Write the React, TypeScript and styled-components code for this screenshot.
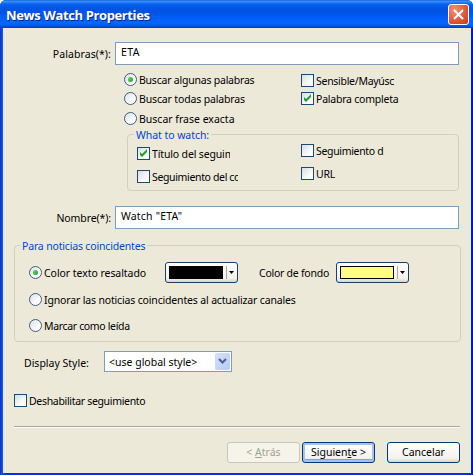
import React from "react";
import styled, { createGlobalStyle, css } from "styled-components";

const GlobalStyle = createGlobalStyle`
  * { box-sizing: border-box; }
  body { margin: 0; }
`;

const Window = styled.main`
  display: flex;
  flex-direction: column;
  width: 473px;
  height: 475px;
  overflow: hidden;
  border-radius: 6px 6px 0 0;
  background: linear-gradient(90deg, #0831d9 0, #0a4be6 2px, #1660ee 3px, #0831d9 4px, #0831d9 469px, #0019b0 473px);
  font: 10.5px/14px "Noto Sans", sans-serif;
  color: #000;
`;

const TitleBar = styled.header`
  display: flex;
  align-items: center;
  justify-content: space-between;
  flex: none;
  height: 28px;
  padding: 1px 4px 0 6px;
  background: linear-gradient(#0a50d0 0, #3a94ff 1px, #2a86fb 2px, #0a62ee 4px, #0055e5 8px, #0054e3 12px, #025cf5 17px, #0466ff 23px, #0360f6 25px, #0148cf 27px, #003dbc 28px);
`;

const Title = styled.h1`
  margin: 0;
  color: #fff;
  font: 700 13px/18px "Open Sans", sans-serif;
  letter-spacing: -0.38px;
  text-shadow: 1px 1px 0 #0a2a8c;
`;

const CloseButton = styled.button`
  display: flex;
  align-items: center;
  justify-content: center;
  width: 21px;
  height: 21px;
  padding: 0;
  border: 1px solid #fff;
  border-radius: 3px;
  background: radial-gradient(circle at 30% 25%, #f0927a 0, #e25d3c 50%, #c43b14 100%);
`;

const Body = styled.div`
  display: flex;
  flex-direction: column;
  flex: 1;
  margin: 0 2px 2px 3px;
  padding: 14px 10px 0 11px;
  background: #ece9d8;
`;

const Text = styled.span<{ $track?: number; $clip?: number }>`
  flex: none;
  white-space: pre;
  letter-spacing: ${(p) => p.$track ?? 0}px;
  ${(p) => p.$clip && css`
    width: ${p.$clip}px;
    overflow: hidden;
  `}
`;

const Field = styled.div<{ $gap?: number }>`
  display: grid;
  grid-template-columns: 97px 344px;
  column-gap: 4px;
  align-items: center;
  height: 23px;
  margin-top: ${(p) => p.$gap ?? 0}px;
  & > span { justify-self: end; }
`;

const Input = styled.div`
  height: 23px;
  padding: 2px 5px;
  border: 1px solid #7f9db9;
  background: #fff;
`;

const Options = styled.div`
  display: grid;
  grid-template-columns: 177px 1fr;
  height: 69px;
  padding: 8px 0 0 110px;
`;

const Column = styled.div<{ $gap: number; $top?: number }>`
  display: flex;
  flex-direction: column;
  gap: ${(p) => p.$gap}px;
  padding-top: ${(p) => p.$top ?? 0}px;
`;

const Choice = styled.label<{ $top?: number }>`
  display: flex;
  align-items: center;
  gap: 2px;
  height: 13px;
  margin-top: ${(p) => p.$top ?? 0}px;
`;

const RadioRing = styled.span`
  display: flex;
  flex: none;
  align-items: center;
  justify-content: center;
  width: 13px;
  height: 13px;
  border: 1px solid #3b5f84;
  border-radius: 50%;
  background: linear-gradient(135deg, #dcdfe0, #fff 70%);
`;

const RadioDot = styled.span`
  width: 5px;
  height: 5px;
  border-radius: 50%;
  background: radial-gradient(circle at 35% 35%, #55d551, #1b9a18);
`;

const CheckSquare = styled.span`
  display: flex;
  flex: none;
  align-items: center;
  justify-content: center;
  width: 13px;
  height: 13px;
  border: 1px solid #1c4a78;
  background: linear-gradient(135deg, #d8dde2, #fff 75%);
`;

const Group = styled.section<{ $left: number; $width: number; $height: number; $top?: number }>`
  display: flex;
  flex-direction: column;
  flex: none;
  width: ${(p) => p.$width}px;
  height: ${(p) => p.$height}px;
  margin: ${(p) => p.$top ?? 0}px 0 0 ${(p) => p.$left}px;
  border: 1px solid #d0d0bf;
  border-radius: 4px;
`;

const Legend = styled.div<{ $left: number }>`
  align-self: flex-start;
  height: 14px;
  margin: -7px 0 0 ${(p) => p.$left}px;
  padding: 0 2px;
  background: #ece9d8;
  color: #0046d5;
`;

const WatchGrid = styled.div`
  display: grid;
  grid-template-columns: 164px 1fr;
  padding: 2px 0 0 9px;
`;

const MatchList = styled.div`
  display: flex;
  flex-direction: column;
  padding: 9px 0 0 14px;
`;

const ColorRow = styled.div`
  display: grid;
  grid-template-columns: 136px 94px 77px 73px;
  align-items: center;
  height: 21px;
`;

const ColorButton = styled.div`
  display: flex;
  align-items: center;
  width: 73px;
  height: 21px;
  padding-left: 3px;
  border: 1px solid #1d3f66;
  border-radius: 3px;
  background: linear-gradient(#fff, #f3f2ec 80%, #d9d5c8);
`;

const Swatch = styled.span<{ $color: string }>`
  width: 54px;
  height: 13px;
  border: 1px solid #000;
  background: ${(p) => p.$color};
`;

const Divider = styled.span`
  width: 1px;
  height: 13px;
  margin: 0 2px 0 3px;
  background: #aaa89c;
`;

const StyleRow = styled.div`
  display: flex;
  align-items: center;
  height: 21px;
  margin: 9px 0 22px 10px;
`;

const StyleLabel = styled.div`
  width: 80px;
  padding-top: 2px;
`;

const Select = styled.div`
  display: flex;
  align-items: center;
  justify-content: space-between;
  width: 128px;
  height: 21px;
  padding: 1px 1px 1px 4px;
  border: 1px solid #7f9db9;
  background: #fff;
`;

const SelectArrow = styled.span`
  display: flex;
  align-items: center;
  justify-content: center;
  width: 15px;
  height: 17px;
  border-radius: 2px;
  background: linear-gradient(135deg, #d3dffd, #b7cbf8);
`;

const Rule = styled.hr`
  width: 446px;
  height: 2px;
  margin: 19px 0 14px;
  border: 0;
  border-top: 1px solid #aca899;
  background: #fff;
`;

const Footer = styled.footer`
  display: flex;
  justify-content: flex-end;
  width: 446px;
`;

const PushButton = styled.button<{ $kind?: "disabled" | "primary"; $left?: number }>`
  width: 73px;
  height: 21px;
  margin: 0 0 0 ${(p) => p.$left ?? 0}px;
  padding: 0 0 1px;
  border: 1px solid #003c74;
  border-radius: 3px;
  background: linear-gradient(#fff, #f3f2ec 80%, #d9d5c8);
  color: #000;
  font: inherit;
  ${(p) => p.$kind === "primary" && css`
    box-shadow: inset 0 0 0 2px #a5c2f2, inset 0 -3px 0 #7f9fe6;
  `}
  ${(p) => p.$kind === "disabled" && css`
    border-color: #c9c7ba;
    background: #f5f4ea;
    color: #a1a192;
  `}
`;

function Radio({ label, on, track, top }: { label: string; on?: boolean; track?: number; top?: number }) {
  return (
    <Choice $top={top}>
      <RadioRing>{on && <RadioDot />}</RadioRing>
      <Text $track={track}>{label}</Text>
    </Choice>
  );
}

function Check({ label, on, track, clip }: { label: string; on?: boolean; track?: number; clip?: number }) {
  return (
    <Choice>
      <CheckSquare>
        {on && (
          <svg width="9" height="9" viewBox="0 0 9 9">
            <path d="M1 3v3l2 2 5-5V0L3 5z" fill="#21a121" />
          </svg>
        )}
      </CheckSquare>
      <Text $track={track} $clip={clip}>{label}</Text>
    </Choice>
  );
}

function ColorPicker({ color }: { color: string }) {
  return (
    <ColorButton>
      <Swatch $color={color} />
      <Divider />
      <svg width="5" height="3" viewBox="0 0 5 3"><path d="M0 0h5L2.5 3z" fill="#000" /></svg>
    </ColorButton>
  );
}

export default function App() {
  return (
    <>
      <GlobalStyle />
      <Window>
        <TitleBar>
          <Title>News Watch Properties</Title>
          <CloseButton aria-label="Close">
            <svg width="11" height="11" viewBox="0 0 11 11">
              <path d="M1 1l9 9M10 1l-9 9" stroke="#fff" strokeWidth="2" />
            </svg>
          </CloseButton>
        </TitleBar>
        <Body>
          <Field>
            <Text $track={0.08}>Palabras(*):</Text>
            <Input><Text $track={0.4}>ETA</Text></Input>
          </Field>
          <Options>
            <Column $gap={6}>
              <Radio on label="Buscar algunas palabras" track={-0.22} />
              <Radio label="Buscar todas palabras" track={-0.15} />
              <Radio top={1} label="Buscar frase exacta" />
            </Column>
            <Column $gap={5} $top={1}>
              <Check label="Sensible/Mayúsc" track={-0.28} />
              <Check on label="Palabra completa" track={-0.22} />
            </Column>
          </Options>
          <Group $left={113} $width={332} $height={57}>
            <Legend $left={6}><Text $track={-0.05}>What to watch:</Text></Legend>
            <WatchGrid>
              <Column $gap={10} $top={3}>
                <Check on label="Título del seguim" clip={78} track={-0.15} />
                <Check label="Seguimiento del co" clip={86} track={-0.35} />
              </Column>
              <Column $gap={10}>
                <Check label="Seguimiento d" track={-0.33} />
                <Check label="URL" track={-0.2} />
              </Column>
            </WatchGrid>
          </Group>
          <Field $gap={15}>
            <Text $track={-0.1}>Nombre(*):</Text>
            <Input><Text $track={0.2}>Watch "ETA"</Text></Input>
          </Field>
          <Group $left={0} $width={447} $height={97} $top={16}>
            <Legend $left={5}><Text $track={-0.17}>Para noticias coincidentes</Text></Legend>
            <MatchList>
              <ColorRow>
                <Radio on label="Color texto resaltado" track={-0.05} />
                <ColorPicker color="#000" />
                <Text $track={-0.25}>Color de fondo</Text>
                <ColorPicker color="#ffff80" />
              </ColorRow>
              <Radio top={10} label="Ignorar las noticias coincidentes al actualizar canales" track={-0.16} />
              <Radio top={13} label="Marcar como leída" track={-0.34} />
            </MatchList>
          </Group>
          <StyleRow>
            <StyleLabel><Text>Display Style:</Text></StyleLabel>
            <Select>
              <Text>{"<use global style>"}</Text>
              <SelectArrow>
                <svg width="9" height="7" viewBox="0 0 9 7"><path d="M1 1l3.5 3.5L8 1" fill="none" stroke="#4d6185" strokeWidth="2" /></svg>
              </SelectArrow>
            </Select>
          </StyleRow>
          <Check label="Deshabilitar seguimiento" track={-0.32} />
          <Rule />
          <Footer>
            <PushButton $kind="disabled" disabled><Text>{"< "}<u>A</u>trás</Text></PushButton>
            <PushButton $kind="primary" $left={2}><Text>Siguien<u>t</u>e {">"}</Text></PushButton>
            <PushButton $left={12}><Text>Cancelar</Text></PushButton>
          </Footer>
        </Body>
      </Window>
    </>
  );
}
